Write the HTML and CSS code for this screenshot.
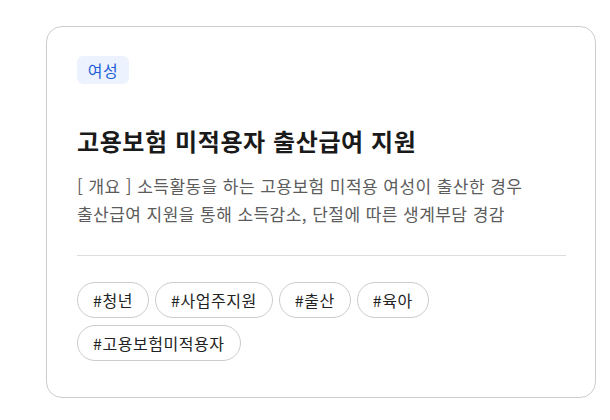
FILE: index.html
```html
<!DOCTYPE html>
<html lang="ko">
<head>
<meta charset="utf-8">
<link rel="stylesheet" href="styles.css">
</head>
<body>
<div class="page">
  <article class="card">
    <span class="badge">여성</span>
    <h2 class="title">고용보험 미적용자 출산급여 지원</h2>
    <p class="desc">[ 개요 ] 소득활동을 하는 고용보험 미적용 여성이 출산한 경우<br>출산급여 지원을 통해 소득감소, 단절에 따른 생계부담 경감</p>
    <hr class="divider">
    <ul class="tags">
      <li class="tag">#청년</li>
      <li class="tag">#사업주지원</li>
      <li class="tag">#출산</li>
      <li class="tag">#육아</li>
      <li class="tag">#고용보험미적용자</li>
    </ul>
  </article>
</div>
</body>
</html>
```
FILE: styles.css
```css
html, body {
  margin: 0;
  padding: 0;
  background: #ffffff;
}
body {
  font-family: "Noto Sans CJK KR", "Noto Sans", sans-serif;
  color: #222;
}
.page {
  padding: 26px 0 0 46px;
}
.card {
  box-sizing: border-box;
  width: 550px;
  height: 372px;
  border: 1px solid #cccccc;
  border-radius: 16px;
  padding: 29px 29px 0 30px;
  display: flex;
  flex-direction: column;
  align-items: flex-start;
}
.badge {
  display: inline-flex;
  align-items: center;
  justify-content: center;
  box-sizing: border-box;
  height: 28px;
  width: 52px;
  border-radius: 6px;
  background: #edf3fe;
  color: #1f5fd6;
  font-size: 16px;
  letter-spacing: 0.5px;
}
.title {
  margin: 41px 0 0 0;
  font-size: 24px;
  line-height: 32px;
  font-weight: 700;
  color: #1a1a1a;
  letter-spacing: 0.6px;
}
.desc {
  margin: 15px 0 0 0;
  font-size: 17px;
  line-height: 28px;
  color: #5c5c5c;
  letter-spacing: 0.45px;
}
.divider {
  align-self: stretch;
  margin: 27px 0 0 0;
  border: 0;
  border-top: 1px solid #dddddd;
  height: 0;
}
.tags {
  list-style: none;
  margin: 26px 0 0 0;
  padding: 0;
  display: flex;
  flex-wrap: wrap;
  gap: 7px 6px;
}
.tag {
  box-sizing: border-box;
  height: 36px;
  padding: 0 15px;
  border: 1px solid #cccccc;
  border-radius: 18px;
  display: flex;
  align-items: center;
  font-size: 16px;
  letter-spacing: 0.55px;
  color: #222;
}
```
